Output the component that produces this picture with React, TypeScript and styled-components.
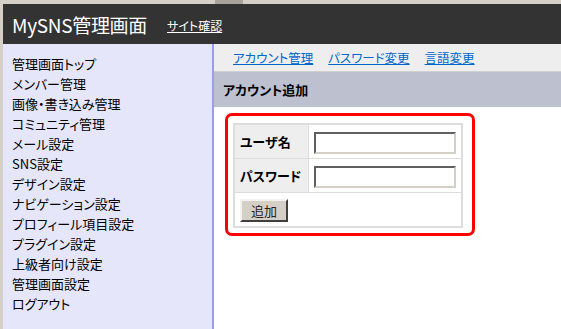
import styled, { createGlobalStyle } from "styled-components"

const Global = createGlobalStyle`
    html, body {
        margin: 0;
        padding: 0;
        background: #d4d0c8;
        font-family: "Noto Sans CJK JP", "Liberation Sans", sans-serif;
    }
`

const Frame = styled.div`
    width: 561px;
    height: 329px;
    display: flex;
    flex-direction: column;
    overflow: hidden;
    background: #d4d0c8;
`
const Chrome = styled.div`
    height: 4px;
    display: flex;
`
const ChromeTab = styled.div`
    width: 28px;
    margin-left: 215px;
    background: #a8a49c;
`
const Page = styled.div`
    flex: 1;
    margin-left: 3px;
    display: flex;
    flex-direction: column;
    background: #ffffff;
`
const Header = styled.header`
    height: 40px;
    background: #333333;
    display: flex;
    align-items: center;
    padding-left: 9px;
    gap: 20px;
    color: #ffffff;
`
const Logo = styled.h1`
    margin: 0;
    font-size: 19px;
    font-weight: normal;
    letter-spacing: -0.3px;
`
const SiteLink = styled.a`
    color: #ffffff;
    font-size: 12px;
    text-decoration: underline;
    font-feature-settings: "palt";
    margin-top: 2px;
`
const Body = styled.div`
    flex: 1;
    display: flex;
`
const Side = styled.nav`
    width: 200px;
    background: #e6e6fa;
    border-right: 2px solid #9c9cec;
    padding: 10px 0 0 9px;
    display: flex;
    flex-direction: column;
`
const SideItem = styled.a`
    font-size: 13px;
    line-height: 20px;
    color: #000000;
    text-decoration: none;
    font-feature-settings: "palt";
    white-space: nowrap;
`
const Main = styled.main`
    flex: 1;
    display: flex;
    flex-direction: column;
`
const Tabs = styled.div`
    height: 27px;
    background: #eeeeee;
    border-bottom: 1px solid #d0d0d0;
    display: flex;
    align-items: center;
    padding-left: 19px;
    gap: 15px;
`
const TabLink = styled.a`
    font-size: 12.5px;
    color: #0066cc;
    text-decoration: underline;
    font-feature-settings: "palt";
`
const TitleBar = styled.h2`
    margin: 0;
    height: 35px;
    background: #bcc0cf;
    display: flex;
    align-items: center;
    padding-left: 9px;
    font-size: 13px;
    font-weight: bold;
    color: #000000;
    font-feature-settings: "palt";
`
const Box = styled.div`
    margin: 6px 0 0 11px;
    width: 234px;
    border: 3px solid #ff0000;
    border-radius: 7px;
    padding: 7px 5px 5px;
`
const Form = styled.table`
    width: 230px;
    border-collapse: collapse;
    border: 2px solid #dddddd;
`
const Label = styled.th`
    width: 68px;
    height: 33px;
    background: #eeeeee;
    border: 1px solid #dddddd;
    text-align: left;
    padding: 0 0 0 5px;
    font-size: 13px;
    font-weight: bold;
    font-feature-settings: "palt";
`
const Cell = styled.td`
    border: 1px solid #dddddd;
    padding: 0 5px;
`
const Input = styled.input`
    box-sizing: border-box;
    width: 142px;
    height: 22px;
    border: 2px solid #d4d0c8;
    border-top-color: #606060;
    border-left-color: #606060;
    background: #ffffff;
    outline: none;
`
const ButtonCell = styled.td`
    height: 33px;
    padding: 0 5px;
`
const Button = styled.button`
    width: 48px;
    height: 23px;
    background: #d4d0c8;
    border: 2px solid #f4f2ee;
    border-right-color: #404040;
    border-bottom-color: #404040;
    font-family: inherit;
    font-size: 13px;
    padding: 0;
    color: #222222;
`

const menu = [
    "管理画面トップ",
    "メンバー管理",
    "画像・書き込み管理",
    "コミュニティ管理",
    "メール設定",
    "SNS設定",
    "デザイン設定",
    "ナビゲーション設定",
    "プロフィール項目設定",
    "プラグイン設定",
    "上級者向け設定",
    "管理画面設定",
    "ログアウト",
]

export default function App() {
    return (
        <Frame>
            <Global />
            <Chrome>
                <ChromeTab />
            </Chrome>
            <Page>
                <Header>
                    <Logo>MySNS管理画面</Logo>
                    <SiteLink href="#">サイト確認</SiteLink>
                </Header>
                <Body>
                    <Side>
                        {menu.map((m) => (
                            <SideItem key={m} href="#">{m}</SideItem>
                        ))}
                    </Side>
                    <Main>
                        <Tabs>
                            <TabLink href="#">アカウント管理</TabLink>
                            <TabLink href="#">パスワード変更</TabLink>
                            <TabLink href="#">言語変更</TabLink>
                        </Tabs>
                        <TitleBar>アカウント追加</TitleBar>
                        <Box>
                            <Form>
                                <tbody>
                                    <tr>
                                        <Label>ユーザ名</Label>
                                        <Cell><Input type="text" /></Cell>
                                    </tr>
                                    <tr>
                                        <Label>パスワード</Label>
                                        <Cell><Input type="password" /></Cell>
                                    </tr>
                                    <tr>
                                        <ButtonCell colSpan={2}><Button>追加</Button></ButtonCell>
                                    </tr>
                                </tbody>
                            </Form>
                        </Box>
                    </Main>
                </Body>
            </Page>
        </Frame>
    )
}
